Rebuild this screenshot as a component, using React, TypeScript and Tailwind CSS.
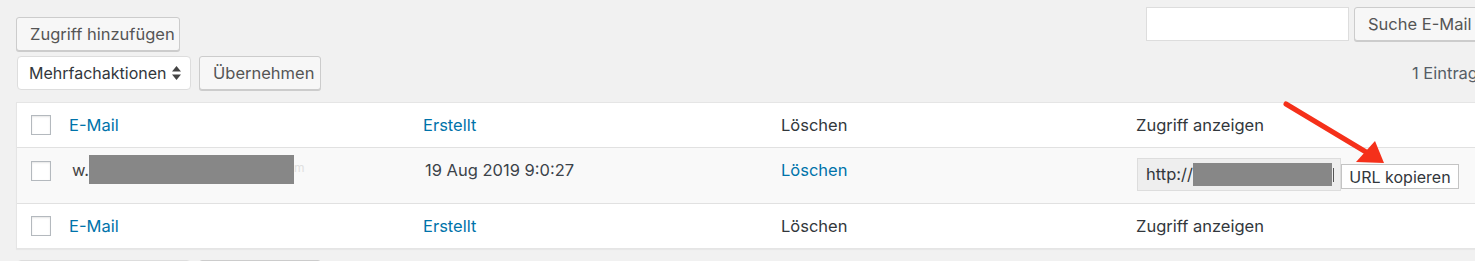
import React from 'react'

const font = { fontFamily: 'Inter, "Liberation Sans", Arial, sans-serif' }

function Checkbox() {
  return <span className="block w-[20px] h-[20px] bg-white border border-[#b4b9be] shadow-[inset_0_1px_2px_rgba(0,0,0,0.1)]" />
}

function Button({ children, className = '' }: { children: React.ReactNode; className?: string }) {
  return (
    <button
      type="button"
      className={`h-[34px] px-[13px] bg-[#f7f7f7] border border-[#cccccc] rounded-[3px] shadow-[0_1px_0_#cccccc] text-[#555555] text-[16.5px] leading-none whitespace-nowrap ${className}`}
    >
      {children}
    </button>
  )
}

function BulkActions() {
  return (
    <div className="flex items-center gap-[8px]">
      <div className="ml-[1px] h-[34px] w-[174px] flex items-center justify-between pl-[11px] pr-[9px] bg-white border border-[#dddddd] rounded-[4px] text-[#32373c] text-[16px]">
        <span>Mehrfachaktionen</span>
        <svg width="9" height="14" viewBox="0 0 9 14">
          <path d="M4.5 0 L9 5.5 H0 Z" fill="#444" />
          <path d="M4.5 14 L9 8.5 H0 Z" fill="#444" />
        </svg>
      </div>
      <Button className="w-[122px]">Übernehmen</Button>
    </div>
  )
}

const cols = 'grid grid-cols-[42px_354px_358px_355px_1fr]'

function HeadRow({ top }: { top?: boolean }) {
  return (
    <div className={`${cols} h-[45px] items-center ${top ? 'border-b' : 'border-t'} border-[#e1e1e1] bg-white`}>
      <div className="pl-[14px]">
        <Checkbox />
      </div>
      <a className="pl-[10px] text-[#0073aa]">E-Mail</a>
      <a className="pl-[10px] text-[#0073aa]">Erstellt</a>
      <span className="pl-[10px] text-[#32373c]">Löschen</span>
      <span className="pl-[10px] text-[#32373c]">Zugriff anzeigen</span>
    </div>
  )
}

function DataRow() {
  return (
    <div className={`${cols} h-[55px] items-start bg-[#f9f9f9]`}>
      <div className="pl-[14px] pt-[13px]">
        <Checkbox />
      </div>
      <div className="pl-[13px] pt-[7px] flex items-start text-[#32373c]">
        <span className="pt-[3px] text-[#444]">w.</span>
        <span className="block w-[205px] h-[29px] bg-[#878787]" />
        <span className="pt-[4px] text-[#e0e0e0] text-[12px]">m</span>
      </div>
      <span className="pl-[12px] pt-[10px] text-[#3c434a]">19 Aug 2019 9:0:27</span>
      <a className="pl-[10px] pt-[10px] text-[#0073aa]">Löschen</a>
      <div className="pl-[11px] pt-[10px] flex items-start">
        <div className="w-[204px] h-[33px] flex items-center pl-[8px] bg-[#eeeeee] border border-[#dddddd] text-[#32373c] overflow-hidden">
          <span>http://</span>
          <span className="block w-[139px] h-[23px] bg-[#878787]" />
          <span className="block w-[1px] h-[14px] ml-[1px] bg-[#555]" />
        </div>
        <button
          type="button"
          className="mt-[6px] w-[118px] h-[25px] bg-white border border-[#c4c4c4] text-[#32373c] text-[16px] leading-none"
        >
          URL kopieren
        </button>
      </div>
    </div>
  )
}

export default function App() {
  return (
    <div className="w-[1475px] h-[261px] overflow-hidden bg-[#f1f1f1]" style={font}>
      <div className="relative w-[1496px] px-[16px] text-[16.5px]">
        <div className="flex justify-between items-start">
          <Button className="mt-[17px] h-[33px] w-[164px]">Zugriff hinzufügen</Button>
          <div className="mt-[7px] flex items-center gap-[5px]">
            <input className="w-[203px] h-[34px] bg-white border border-[#dddddd] outline-none" />
            <Button className="w-[126px]">Suche E-Mail</Button>
          </div>
        </div>

        <div className="mt-[5px] flex justify-between items-center">
          <BulkActions />
          <span className="text-[#555d66] pr-[2px]">1 Eintrag</span>
        </div>

        <div className="mt-[12px] border border-[#e5e5e5] shadow-[0_1px_1px_rgba(0,0,0,0.04)]">
          <HeadRow top />
          <DataRow />
          <HeadRow />
        </div>

        <div className="mt-[11px]">
          <BulkActions />
        </div>

        <svg className="absolute left-0 top-0 w-[1496px] h-[261px] pointer-events-none" viewBox="0 0 1496 261">
          <line x1="1286" y1="104" x2="1366" y2="152" stroke="#f5301a" strokeWidth="5" strokeLinecap="round" />
          <polygon points="1384,163 1356,162 1375,141" fill="#f5301a" />
        </svg>
      </div>
    </div>
  )
}
